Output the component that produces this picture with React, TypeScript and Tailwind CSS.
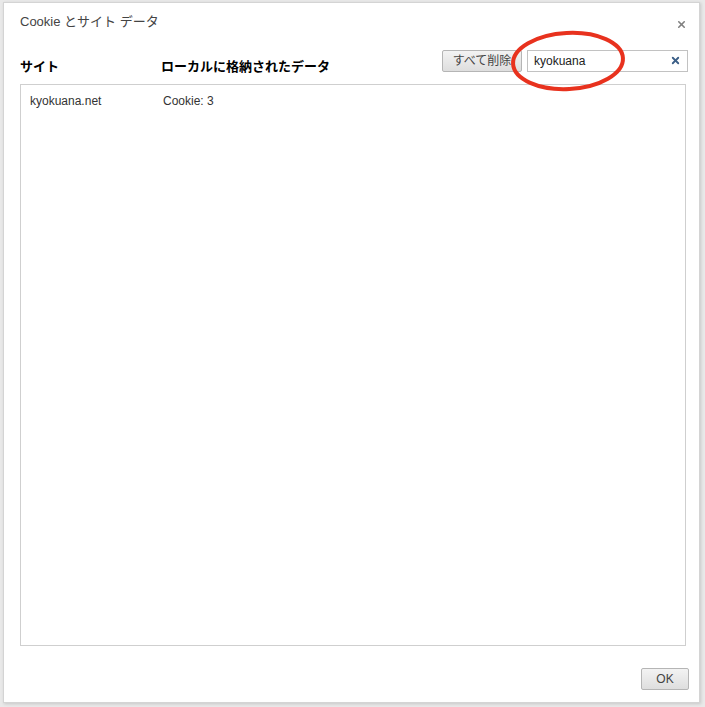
import { X } from 'lucide-react'

const jp = { fontFamily: '"Liberation Sans", "Noto Sans CJK JP", sans-serif' }

export default function App() {
  return (
    <div className="relative w-[705px] h-[707px] bg-[#e9e9e9] pl-[3px] pt-[2px]" style={jp}>
      <div className="flex flex-col w-[697px] h-[701px] bg-white border border-[#d4d4d4] shadow-[1px_1px_3px_rgba(0,0,0,0.15)] pl-[16px] pr-[13px] relative">
        {/* Cabecera */}
        <div className="pt-[9px] h-[29px] flex items-center justify-between">
          <h1 className="text-[13px] leading-[20px] text-[#444]">Cookie とサイト データ</h1>
          <button className="absolute right-[12px] top-[16px] text-[#808080]">
            <X size={11} strokeWidth={3.5} />
          </button>
        </div>

        {/* Barra */}
        <div className="mt-[18px] h-[26px] flex items-end">
          <div className="w-[141px] text-[13px] font-bold leading-[16px] text-black mb-[1px]">サイト</div>
          <div className="flex-1 text-[13px] font-bold leading-[16px] text-black mb-[1px]">ローカルに格納されたデータ</div>
          <div className="flex items-center gap-[5px] mb-[4px] mr-[-2px]">
            <button className="h-[22px] w-[80px] rounded-[2px] border border-[#b5b5b5] bg-gradient-to-b from-[#f3f3f3] to-[#dedede] text-[12px] text-[#444]">
              すべて削除
            </button>
            <div className="relative h-[22px] w-[161px] border border-[#c2c2c2] bg-white flex items-center pl-[6px]">
              <span className="text-[12px] text-[#222]">kyokuana</span>
              <span className="absolute right-[6px] top-[4px] text-[#3c5f87]">
                <X size={11} strokeWidth={4} />
              </span>
            </div>
          </div>
        </div>

        {/* Lista */}
        <div className="mt-[8px] h-[562px] border border-[#cfcfcf] bg-white pt-[8px] pl-[9px]">
          <div className="flex text-[12px] leading-[16px] text-[#333]">
            <span className="w-[133px]">kyokuana.net</span>
            <span>Cookie: 3</span>
          </div>
        </div>

        {/* Pie */}
        <div className="mt-[22px] flex justify-end mr-[-3px]">
          <button className="h-[22px] w-[48px] rounded-[2px] border border-[#b5b5b5] bg-gradient-to-b from-[#f3f3f3] to-[#dedede] text-[12px] text-[#444]">
            OK
          </button>
        </div>
      </div>

      <svg className="absolute left-0 top-0 pointer-events-none" width="705" height="707">
        <ellipse cx="568" cy="61" rx="55" ry="28" fill="none" stroke="#e8321e" strokeWidth="4" transform="rotate(-3 568 61)" />
      </svg>
    </div>
  )
}
